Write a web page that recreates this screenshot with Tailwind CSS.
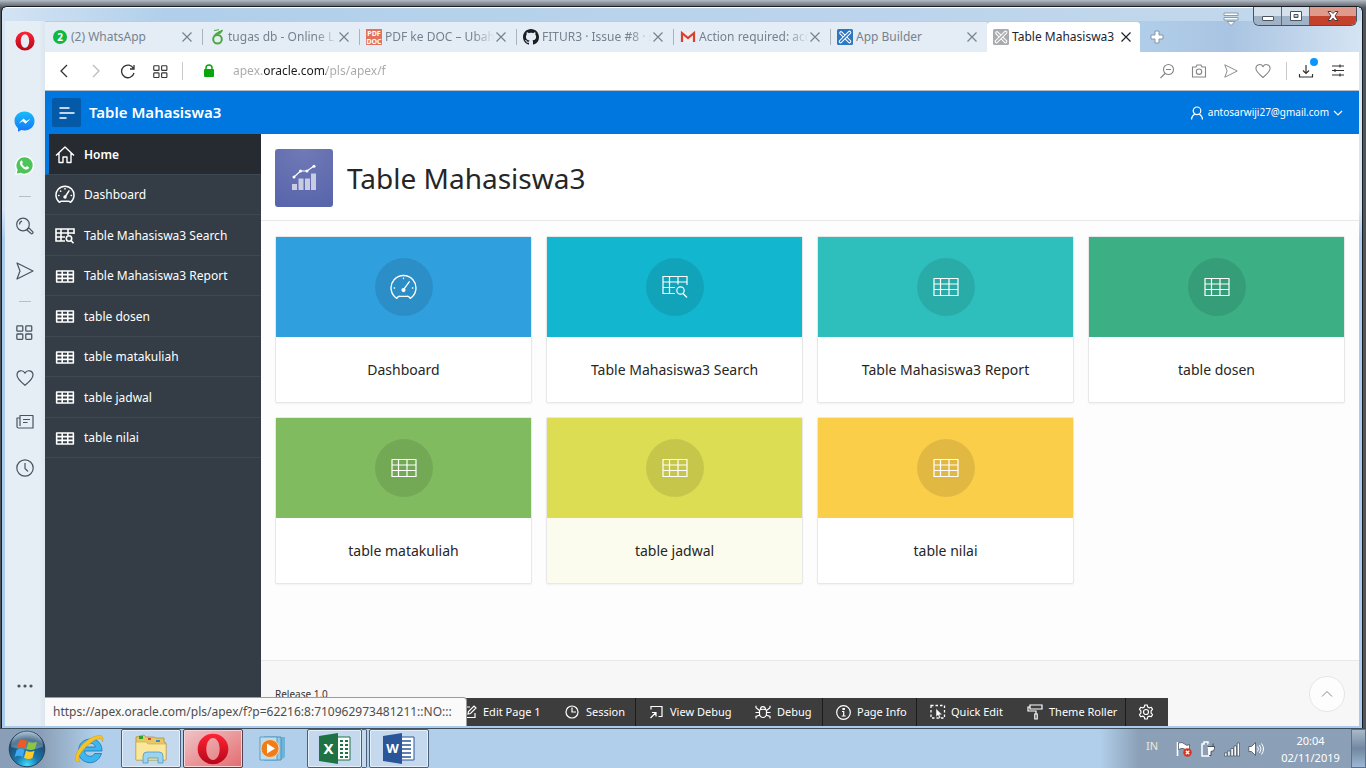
<!DOCTYPE html>
<html lang="en">
<head>
<meta charset="utf-8">
<title>Table Mahasiswa3</title>
<script src="https://cdn.jsdelivr.net/npm/@tailwindcss/browser@4"></script>
</head>
<body class="h-screen overflow-hidden bg-[#7d858e] font-['Noto_Sans','Open_Sans',sans-serif]">

<svg class="absolute size-0" aria-hidden="true">
  <defs><linearGradient id="og" x1="0" y1="0" x2="0" y2="1"><stop offset="0" stop-color="#ff2436"/><stop offset="1" stop-color="#b50719"/></linearGradient></defs>
  <symbol id="x" viewBox="0 0 12 12"><path d="M1.500 1.500l9 9M10.500 1.500l-9 9" fill="none" stroke="currentColor" stroke-width="1.200"/></symbol>
  <symbol id="grid4" viewBox="0 0 16 16"><g fill="none" stroke="currentColor" stroke-width="1.200"><rect x=".8" y="1.800" width="5.600" height="5" rx=".8"/><rect x="9.200" y="1.800" width="5.600" height="5" rx=".8"/><rect x=".8" y="9.400" width="5.600" height="5" rx=".8"/><rect x="9.200" y="9.400" width="5.600" height="5" rx=".8"/></g></symbol>
  <symbol id="heart" viewBox="0 0 18 18"><path d="M9 16.300C5 13 1 9.800 1 6a4.200 4.200 0 0 1 8-1.800A4.200 4.200 0 0 1 17 6c0 3.800-4 7-8 10.300z" fill="none" stroke="currentColor" stroke-width="1.200" stroke-linejoin="round"/></symbol>
  <symbol id="plane" viewBox="0 0 18 18"><path d="M1 1l16 8L1 17l3-8z" fill="none" stroke="currentColor" stroke-width="1.200" stroke-linejoin="round"/></symbol>
  <symbol id="table" viewBox="0 0 20 14"><path d="M1 1h18v12H1zM1 5h18M1 9h18M7 1v12M13 1v12" fill="none" stroke="currentColor" stroke-width="1.700" stroke-linejoin="round"/></symbol>
  <symbol id="tablethin" viewBox="0 0 26 20"><path d="M1 1.500h24v17H1zM1 7h24M1 12.500h24M7.500 1.500v17M16 1.500v17" fill="none" stroke="currentColor" stroke-width="1.200" stroke-linejoin="round"/></symbol>
  <symbol id="tsearch" viewBox="0 0 20 16"><g fill="none" stroke="currentColor" stroke-width="1.600"><path d="M19 6V1H1v12h9M1 5h18M1 9h9M6 1v12M13 1v6"/><circle cx="14" cy="10.500" r="2.700"/><path d="M16 12.500l2.500 2.700"/></g></symbol>
  <symbol id="tsearchthin" viewBox="0 0 26 24"><g fill="none" stroke="currentColor" stroke-width="1.200"><path d="M25 10V1.500H1v17h12M1 7h24M1 12.500h12M7.500 1.500v17M16 1.500v8"/><circle cx="18.500" cy="15.500" r="3.700"/><path d="M21 18.500l4 4"/></g></symbol>
  <symbol id="gauge" viewBox="0 0 20 20"><g fill="none" stroke="currentColor" stroke-width="1.500" stroke-linecap="round" stroke-linejoin="round"><path d="M4.500 17.300A9 9 0 1 1 15.500 17.300L13.800 16.200H6.200z"/><path d="M10 12l4-6.200M10 3.500v.4M3.600 10.500h.4M16.200 10.500h.3M5.500 6l.2.2"/></g><circle cx="10" cy="12" r="1.700" fill="currentColor"/></symbol>
  <symbol id="gaugethin" viewBox="0 1 26 26"><g fill="none" stroke="currentColor" stroke-width="1.300" stroke-linecap="round" stroke-linejoin="round"><path d="M6.500 24.500A12 12 0 1 1 19.500 24.500Q18.500 22 16 22.500H10Q7.500 22 6.500 24.500z"/><path d="M13 16l5.500-7.500M13 5v.3M4 14.500h.4M21.600 14.500h.4"/></g><circle cx="13" cy="16.500" r="2" fill="currentColor"/></symbol>
  <symbol id="apexlogo" viewBox="0 0 16 16"><rect width="16" height="16" rx="1.500" fill="currentColor"/><g fill="none" stroke-linecap="round"><path d="M4 4l8.500 8.500" stroke="#fff" stroke-width="3.600"/><path d="M4 4l8.500 8.500" stroke="currentColor" stroke-width="1.600"/><path d="M12.500 3.500l-9 9" stroke="#fff" stroke-width="3.600"/><path d="M12.500 3.500l-9 9" stroke="currentColor" stroke-width="1.600"/></g></symbol>
  <symbol id="opera" viewBox="0 0 24 24"><path fill-rule="evenodd" fill="url(#og)" d="M12 .5a11.500 11.500 0 1 1 0 23a11.500 11.500 0 0 1 0-23zM12 3.800c-3 0-5 3.700-5 8.200s2 8.200 5 8.200s5-3.700 5-8.200s-2-8.200-5-8.200z"/></symbol>
</svg>

<div class="flex h-full flex-col">
  <!-- Browser window -->
  <div class="relative min-h-0 flex-1 bg-linear-to-b from-[#b4bcc6] to-[#50555b] to-[8px] pt-[6px] pr-[3px] pl-px">
    <div class="flex h-full flex-col rounded-t-md border border-b-0 border-[#191d22] bg-linear-to-b from-[#d8e6f4] from-[28%] to-[#abcbed] to-[32%] px-[3px] pb-[2px] shadow-[inset_0_1px_0_#ffffff]">
      <div class="-mx-[2px] mt-px h-[13px] shrink-0 bg-linear-to-r from-[#d3e3f3] via-[#b1cfea] via-[12%] to-[#c3d8ec]"></div>
      <div class="flex min-h-0 flex-1">
        <!-- Opera sidebar -->
        <aside class="relative z-10 flex w-10 shrink-0 flex-col items-center bg-linear-to-r from-[#e5edf5] from-[85%] to-[#dce6ef] pt-[10px] pr-px text-[#49545f]">
          <button aria-label="Opera menu" class="mb-[60px]"><svg class="size-5"><use href="#opera"/></svg></button>
          <button aria-label="Messenger" class="mb-[24px]"><svg class="size-[21px]" viewBox="0 0 21 21"><defs><linearGradient id="mg" x1="0" y1="0" x2="0" y2="1"><stop offset="0" stop-color="#16bdfb"/><stop offset="1" stop-color="#1475f8"/></linearGradient></defs><path fill="url(#mg)" d="M10.500.5c6 0 10 4.300 10 9.500s-4 9.500-10 9.500c-1.200 0-2.300-.2-3.200-.5L4 20.800v-3.500C2 15.500.5 13 .5 10c0-5.200 4-9.500 10-9.500z"/><path d="M4.500 12.500l5-5 2.800 2.500 4.200-2.300-5 5-2.800-2.500z" fill="#fff"/></svg></button>
          <button aria-label="WhatsApp" class="mb-[21px]"><svg class="size-[19px]" viewBox="0 0 19 19"><path fill="#fff" d="M9.500 0a9.500 9.500 0 1 1-4 18L0 19l1.200-5A9.500 9.500 0 0 1 9.500 0z"/><path fill="#4cc45a" d="M9.500 1.200a8.200 8.200 0 1 1-3.800 15.500L1.700 17.500l1-3.800A8.200 8.200 0 0 1 9.500 1.200z"/><path fill="#fff" d="M5.500 5.300c1-1.200 1.600-.9 2 .2.500 1.200.4 1.300-.4 2.200.8 1.800 2 2.900 3.600 3.500.9-1.200 1.100-1.200 2.100-.7 1.300.6 1.500.8.900 2-1.300 1.900-4 1-5.900-.6C5.500 10 4 7.200 5.500 5.300z"/></svg></button>
          <span class="mb-5 h-px w-3 bg-[#b4bfca]"></span>
          <button aria-label="Search" class="mb-[26px]"><svg class="size-[19px]" viewBox="0 0 19 19" fill="none" stroke="currentColor" stroke-width="1.200"><circle cx="8" cy="7.500" r="6.300"/><path d="M4.500 7.500A3.500 3.500 0 0 1 7 4.200M12.500 12l1.500-1 3.800 3.800c.8 1-.8 2.500-1.800 1.700L12 13z"/></svg></button>
          <button aria-label="My Flow" class="mb-[21px]"><svg class="size-[18px]"><use href="#plane"/></svg></button>
          <span class="mb-[22px] h-px w-3 bg-[#b4bfca]"></span>
          <button aria-label="Speed Dial" class="mb-7"><svg class="size-[17px]"><use href="#grid4"/></svg></button>
          <button aria-label="Bookmarks" class="mb-[26px]"><svg class="size-[18px]"><use href="#heart"/></svg></button>
          <button aria-label="News" class="mb-7"><svg class="size-[18px]" viewBox="0 0 18 18" fill="none" stroke="currentColor" stroke-width="1.200" stroke-linejoin="round"><path d="M4 2.500h13v12.500H2.500c-1 0-1.500-.7-1.500-1.500V5h3zM4 2.500v10.500M7 6.500h7M7 9.500h4.500"/></svg></button>
          <button aria-label="History"><svg class="size-[18px]" viewBox="0 0 18 18" fill="none" stroke="currentColor" stroke-width="1.200"><circle cx="9" cy="9" r="8.200"/><path d="M9 4v5.500l3 3"/></svg></button>
          <button aria-label="Sidebar setup" class="mt-auto mb-[38px]"><svg class="h-1 w-4" viewBox="0 0 16 4" fill="currentColor"><circle cx="2" cy="2" r="1.600"/><circle cx="8" cy="2" r="1.600"/><circle cx="14" cy="2" r="1.600"/></svg></button>
        </aside>

        <div class="flex min-w-0 flex-1 flex-col">
          <!-- Tabs -->
          <div class="-mr-[3px] flex h-[31px] shrink-0 items-stretch bg-linear-to-r from-[#b1cfea] from-[82%] via-[#a9c4e2] via-[90%] to-[#d5e4f3] text-[12px] text-[#75828f]">
            <div class="flex w-[157px] items-center border-t border-[#c5cbd1] bg-[#e4edf5] pr-[9px] pl-2">
              <svg class="mr-1 size-[14px] shrink-0" viewBox="0 0 14 14"><circle cx="7" cy="7" r="7" fill="#0fb843"/><text x="7" y="10.500" text-anchor="middle" font-size="10" font-weight="bold" fill="#fff">2</text></svg>
              <a href="#" class="min-w-0 flex-1 truncate">(2) WhatsApp</a>
              <button aria-label="Close WhatsApp"><svg class="size-3"><use href="#x"/></svg></button>
            </div>
            <div class="flex w-[157px] items-center border-t border-[#c5cbd1] bg-[#e4edf5] pr-[9px]">
              <span class="mr-2 h-4 w-px bg-[#a9b3bd]"></span>
              <svg class="mr-1 h-4 w-[13px] shrink-0" viewBox="0 0 13 16" fill="none"><circle cx="6.500" cy="10.200" r="4.300" stroke="#4ca83e" stroke-width="2"/><path d="M2.500 8.500C3 5 6 3.500 11.500 1.200 10.500 4.500 8 5 5 6" fill="#4ca83e" stroke="#4ca83e"/><path d="M3 1.500l5-.8" stroke="#4ca83e"/></svg>
              <a href="#" class="min-w-0 flex-1 whitespace-nowrap mask-r-from-80%">tugas db - Online L</a>
              <button aria-label="Close tugas db"><svg class="size-3"><use href="#x"/></svg></button>
            </div>
            <div class="flex w-[157px] items-center border-t border-[#c5cbd1] bg-[#e4edf5] pr-[9px]">
              <span class="mr-[6px] h-4 w-px bg-[#a9b3bd]"></span>
              <svg class="mr-[3px] size-4 shrink-0" viewBox="0 0 16 16"><rect width="16" height="16" fill="#e2725b"/><g font-size="7" font-weight="bold" fill="#fff" text-anchor="middle"><text x="8" y="7">PDF</text><text x="8" y="14.500">DOC</text></g></svg>
              <a href="#" class="min-w-0 flex-1 whitespace-nowrap mask-r-from-80%">PDF ke DOC – Ubah</a>
              <button aria-label="Close PDF ke DOC"><svg class="size-3"><use href="#x"/></svg></button>
            </div>
            <div class="flex w-[157px] items-center border-t border-[#c5cbd1] bg-[#e4edf5] pr-[9px]">
              <span class="mr-[6px] h-4 w-px bg-[#a9b3bd]"></span>
              <svg class="mr-[3px] size-4 shrink-0" viewBox="0 0 16 16" fill="#1b1f23"><path d="M8 0C3.580 0 0 3.580 0 8c0 3.540 2.290 6.530 5.470 7.590.4.070.55-.17.55-.38 0-.19-.01-.82-.01-1.490-2.010.37-2.530-.49-2.690-.94-.09-.23-.48-.94-.82-1.130-.28-.15-.68-.52-.01-.53.63-.01 1.080.58 1.230.82.72 1.210 1.870.87 2.330.66.07-.52.28-.87.51-1.070-1.780-.2-3.640-.89-3.640-3.950 0-.87.31-1.590.82-2.150-.08-.2-.36-1.020.08-2.120 0 0 .67-.21 2.200.82.64-.18 1.320-.27 2-.27s1.360.09 2 .27c1.530-1.040 2.200-.82 2.200-.82.44 1.100.16 1.920.08 2.120.51.56.82 1.270.82 2.150 0 3.070-1.870 3.750-3.650 3.950.29.25.54.73.54 1.480 0 1.070-.01 1.930-.01 2.200 0 .21.15.46.55.38A8.010 8.010 0 0 0 16 8c0-4.420-3.580-8-8-8z"/></svg>
              <a href="#" class="min-w-0 flex-1 whitespace-nowrap mask-r-from-80%">FITUR3 · Issue #8 · s</a>
              <button aria-label="Close FITUR3"><svg class="size-3"><use href="#x"/></svg></button>
            </div>
            <div class="flex w-[157px] items-center border-t border-[#c5cbd1] bg-[#e4edf5] pr-[9px]">
              <span class="mr-[6px] h-4 w-px bg-[#a9b3bd]"></span>
              <svg class="mr-[3px] size-4 shrink-0" viewBox="0 0 16 16"><path d="M2 3h12v10H2z" fill="#eee"/><path d="M2 13V4l6 5 6-5v9" fill="none" stroke="#d93f30" stroke-width="2.200"/></svg>
              <a href="#" class="min-w-0 flex-1 whitespace-nowrap mask-r-from-80%">Action required: acc</a>
              <button aria-label="Close Action required"><svg class="size-3"><use href="#x"/></svg></button>
            </div>
            <div class="flex w-[157px] items-center border-t border-[#c5cbd1] bg-[#e4edf5] pr-[9px]">
              <span class="mr-[6px] h-4 w-px bg-[#a9b3bd]"></span>
              <svg class="mr-[3px] size-4 shrink-0 text-[#2d76c0]"><use href="#apexlogo"/></svg>
              <a href="#" class="min-w-0 flex-1 truncate">App Builder</a>
              <button aria-label="Close App Builder"><svg class="size-3"><use href="#x"/></svg></button>
            </div>
            <div class="flex w-[153px] items-center rounded-t-sm border-t border-[#c5cbd1] bg-white pr-2 pl-[6px] text-[#1c2430]">
              <svg class="mr-[3px] size-4 shrink-0 text-[#a8acb0]"><use href="#apexlogo"/></svg>
              <a href="#" class="min-w-0 flex-1 whitespace-nowrap">Table Mahasiswa3</a>
              <button aria-label="Close Table Mahasiswa3"><svg class="size-3"><use href="#x"/></svg></button>
            </div>
            <button aria-label="New tab" class="ml-[10px]"><svg class="size-[14px]" viewBox="0 0 14 14"><path d="M5 1h4v4h4v4H9v4H5V9H1V5h4z" fill="#fff" stroke="#8496aa"/></svg></button>
          </div>

          <!-- Address bar -->
          <div class="flex h-[39px] shrink-0 items-center border-b border-[#b5bcc4] bg-white text-[#333]">
            <button aria-label="Back" class="ml-[11px]"><svg class="size-4" viewBox="0 0 16 16" fill="none" stroke="currentColor" stroke-width="1.300"><path d="M11 2L5 8l6 6"/></svg></button>
            <button aria-label="Forward" class="ml-4 text-[#bbb]"><svg class="size-4" viewBox="0 0 16 16" fill="none" stroke="currentColor" stroke-width="1.300"><path d="M5 2l6 6-6 6"/></svg></button>
            <button aria-label="Reload" class="ml-4"><svg class="size-4" viewBox="0 0 16 16" fill="none" stroke="currentColor" stroke-width="1.300"><path d="M13.500 5.500A6.300 6.300 0 1 0 14 10M14 2v4h-4"/></svg></button>
            <button aria-label="Speed Dial" class="ml-[17px]"><svg class="size-[15px]"><use href="#grid4"/></svg></button>
            <span class="ml-[14px] h-[18px] w-px bg-[#c9c9c9]"></span>
            <svg class="ml-5 h-[14px] w-3" viewBox="0 0 12 14"><rect x="1" y="5" width="10" height="8" rx="1" fill="#0aa50a"/><path d="M3 6V4a3 3 0 0 1 6 0v2" fill="none" stroke="#0aa50a" stroke-width="1.500"/></svg>
            <input aria-label="Address" value="apex.oracle.com/pls/apex/f" class="ml-[18px] min-w-0 flex-1 bg-[linear-gradient(90deg,#a8a8a8_0_30px,#1a1a1a_30px_93px,#a8a8a8_93px)] bg-clip-text text-[12px] text-transparent outline-none">
            <div class="flex items-center gap-4 pr-[13px] text-[#858585]">
              <button aria-label="Zoom out"><svg class="size-4" viewBox="0 0 16 16" fill="none" stroke="currentColor" stroke-width="1.100"><circle cx="9.500" cy="6.500" r="5"/><path d="M7 6.500h5M6 10.500L1.500 15"/></svg></button>
              <button aria-label="Snapshot"><svg class="size-4" viewBox="0 0 16 16" fill="none" stroke="currentColor" stroke-width="1.100"><path d="M1.500 4H5l1-2h4l1 2h3.500v10h-13z"/><circle cx="8" cy="8.700" r="2.700"/></svg></button>
              <button aria-label="Send"><svg class="h-[14px] w-4"><use href="#plane"/></svg></button>
              <button aria-label="Bookmark"><svg class="size-4"><use href="#heart"/></svg></button>
              <span class="-mx-px h-[18px] w-px bg-[#c9c9c9]"></span>
              <button aria-label="Downloads" class="relative -ml-1 text-[#333]"><svg class="size-4" viewBox="0 0 16 16" fill="none" stroke="currentColor" stroke-width="1.200"><path d="M8 2v8.500M5 7.500l3 3 3-3M1.500 11v3h13v-3"/></svg><span class="absolute -top-[5px] left-[12px] size-2 rounded-full bg-[#0b96ff]"></span></button>
              <button aria-label="Easy setup" class="text-[#333]"><svg class="size-4" viewBox="0 0 16 16" fill="none" stroke="currentColor" stroke-width="1.200"><path d="M2 3h12M2 7.500h12M2 12h12M10 1.500v3M5 6v3M10 10.500v3"/></svg></button>
            </div>
          </div>

          <!-- Page -->
          <div class="relative flex min-h-0 flex-1 flex-col bg-[#fdfdfd]">
            <header class="flex h-[43px] shrink-0 items-center bg-[#0076df] pr-4 pl-[7px] text-white">
              <button aria-label="Toggle navigation" class="flex size-[29px] items-center justify-center rounded-xs bg-[#055aa8]"><svg class="size-4" viewBox="0 0 16 16" stroke="#fff" stroke-width="1.600"><path d="M.5 3h10M.5 8h15M.5 13h7"/></svg></button>
              <a href="#" class="ml-2 text-[15px] font-semibold">Table Mahasiswa3</a>
              <button class="ml-auto flex items-center text-[10px]"><svg class="mr-1 size-[14px]" viewBox="0 0 14 14" fill="none" stroke="#fff" stroke-width="1.200"><circle cx="7" cy="4.800" r="3.800"/><path d="M1.500 13.500c0-2.500 1-4 3.200-5.200M12.500 13.500c0-2.500-1-4-3.200-5.200"/></svg>antosarwiji27@gmail.com<svg class="ml-1 size-[10px]" viewBox="0 0 10 10" fill="none" stroke="#fff" stroke-width="1.200"><path d="M1 3l4 4 4-4"/></svg></button>
            </header>
            <div class="flex min-h-0 flex-1">
              <nav class="w-[216px] shrink-0 bg-[#343d46] text-[12px] text-white">
                <div class="grid h-[324px] grid-rows-8">
                  <a href="#" class="flex items-center gap-[9px] border-b border-l-4 border-b-[#3e4852] border-l-[#0076df] bg-[#252b31] pt-[2px] pl-[6px] font-semibold"><svg class="size-5" viewBox="0 0 20 20" fill="none" stroke="currentColor" stroke-width="1.400" stroke-linejoin="round"><path d="M1 10.500L10 2l9 8.500M4 8v9.500h4V12h4v5.500h4V8"/></svg>Home</a>
                  <a href="#" class="flex items-center gap-[9px] border-b border-[#3e4852] pt-[2px] pl-[10px]"><svg class="size-5"><use href="#gauge"/></svg>Dashboard</a>
                  <a href="#" class="flex items-center gap-[9px] border-b border-[#3e4852] pt-[2px] pl-[10px]"><svg class="h-4 w-5"><use href="#tsearch"/></svg>Table Mahasiswa3 Search</a>
                  <a href="#" class="flex items-center gap-[9px] border-b border-[#3e4852] pt-[2px] pl-[10px]"><svg class="h-[13px] w-5"><use href="#table"/></svg>Table Mahasiswa3 Report</a>
                  <a href="#" class="flex items-center gap-[9px] border-b border-[#3e4852] pt-[2px] pl-[10px]"><svg class="h-[13px] w-5"><use href="#table"/></svg>table dosen</a>
                  <a href="#" class="flex items-center gap-[9px] border-b border-[#3e4852] pt-[2px] pl-[10px]"><svg class="h-[13px] w-5"><use href="#table"/></svg>table matakuliah</a>
                  <a href="#" class="flex items-center gap-[9px] border-b border-[#3e4852] pt-[2px] pl-[10px]"><svg class="h-[13px] w-5"><use href="#table"/></svg>table jadwal</a>
                  <a href="#" class="flex items-center gap-[9px] border-b border-[#3e4852] pt-[2px] pl-[10px]"><svg class="h-[13px] w-5"><use href="#table"/></svg>table nilai</a>
                </div>
              </nav>
              <main class="flex min-w-0 flex-1 flex-col">
                <div class="flex h-[87px] shrink-0 items-center gap-[14px] border-b border-[#e8e8e8] bg-white px-[14px] pt-px">
                  <svg class="h-[58px] w-[58px]" viewBox="0 0 58 58"><defs><radialGradient id="hg" cx=".5" cy="0" r="1"><stop offset="0" stop-color="#717ab7"/><stop offset="1" stop-color="#5966ab"/></radialGradient></defs><rect width="58" height="58" rx="3" fill="url(#hg)"/><path d="M17 35h5v6h-5zM23.500 29.500h5V41h-5zM30 29.500h5V41h-5zM36 24.500h5V41h-5z" fill="#fff" opacity=".65"/><path d="M19 28l6.500-6 6.500 0 7-5" fill="none" stroke="#fff" stroke-width="1.200"/><g fill="#fff"><circle cx="19" cy="28" r="1.500"/><circle cx="25.500" cy="22" r="1.500"/><circle cx="32" cy="22" r="1.500"/><circle cx="39" cy="17.300" r="1.500"/></g></svg>
                  <h1 class="text-[28px] text-[#262626]">Table Mahasiswa3</h1>
                </div>
                <div class="grid flex-1 grid-cols-4 content-start gap-[14px] px-[14px] pt-[15px] text-[14px] text-[#262626]">
                  <a href="#" class="rounded-xs border border-[#e8e8e8] bg-white shadow-xs"><span class="flex h-[100px] items-center justify-center bg-[#309fdd]"><span class="flex size-[58px] items-center justify-center rounded-full bg-black/10 text-white"><svg class="size-[27px]"><use href="#gaugethin"/></svg></span></span><span class="flex h-[65px] items-center justify-center">Dashboard</span></a>
                  <a href="#" class="rounded-xs border border-[#e8e8e8] bg-white shadow-xs"><span class="flex h-[100px] items-center justify-center bg-[#13b6cf]"><span class="flex size-[58px] items-center justify-center rounded-full bg-black/10 text-white"><svg class="h-6 w-[26px]"><use href="#tsearchthin"/></svg></span></span><span class="flex h-[65px] items-center justify-center">Table Mahasiswa3 Search</span></a>
                  <a href="#" class="rounded-xs border border-[#e8e8e8] bg-white shadow-xs"><span class="flex h-[100px] items-center justify-center bg-[#2ebfbc]"><span class="flex size-[58px] items-center justify-center rounded-full bg-black/10 text-white"><svg class="h-5 w-[26px]"><use href="#tablethin"/></svg></span></span><span class="flex h-[65px] items-center justify-center">Table Mahasiswa3 Report</span></a>
                  <a href="#" class="rounded-xs border border-[#e8e8e8] bg-white shadow-xs"><span class="flex h-[100px] items-center justify-center bg-[#3caf85]"><span class="flex size-[58px] items-center justify-center rounded-full bg-black/10 text-white"><svg class="h-5 w-[26px]"><use href="#tablethin"/></svg></span></span><span class="flex h-[65px] items-center justify-center">table dosen</span></a>
                  <a href="#" class="rounded-xs border border-[#e8e8e8] bg-white shadow-xs"><span class="flex h-[100px] items-center justify-center bg-[#81bb5f]"><span class="flex size-[58px] items-center justify-center rounded-full bg-black/10 text-white"><svg class="h-5 w-[26px]"><use href="#tablethin"/></svg></span></span><span class="flex h-[65px] items-center justify-center">table matakuliah</span></a>
                  <a href="#" class="rounded-xs border border-[#e8e8e8] bg-[#fbfced] shadow-xs"><span class="flex h-[100px] items-center justify-center bg-[#dddd53]"><span class="flex size-[58px] items-center justify-center rounded-full bg-black/10 text-white"><svg class="h-5 w-[26px]"><use href="#tablethin"/></svg></span></span><span class="flex h-[65px] items-center justify-center">table jadwal</span></a>
                  <a href="#" class="rounded-xs border border-[#e8e8e8] bg-white shadow-xs"><span class="flex h-[100px] items-center justify-center bg-[#fbce4a]"><span class="flex size-[58px] items-center justify-center rounded-full bg-black/10 text-white"><svg class="h-5 w-[26px]"><use href="#tablethin"/></svg></span></span><span class="flex h-[65px] items-center justify-center">table nilai</span></a>
                </div>
                <footer class="flex h-[66px] shrink-0 items-start justify-between border-t border-[#e8e8e8] bg-[#f7f7f7] px-[14px] pt-[15px]">
                  <span class="pt-[11px] text-[10px] text-[#333]">Release 1.0</span>
                  <button aria-label="Back to top" class="flex size-9 items-center justify-center rounded-full border border-[#e6e6e6] bg-[#fdfdfd] text-[#888]"><svg class="size-3" viewBox="0 0 12 12" fill="none" stroke="currentColor"><path d="M1 8.500l5-5 5 5"/></svg></button>
                </footer>
              </main>
            </div>

            <!-- Developer toolbar -->
            <div class="absolute right-[191px] bottom-0 flex h-7 bg-[#3d3d3d] text-[11px] text-white">
              <button class="flex w-[95px] items-center gap-[6px] pl-[7px]"><svg class="size-[14px]" viewBox="0 0 14 14" fill="none" stroke="currentColor" stroke-width="1.200"><path d="M7 2H1.500v10.500H12V8M5 9l.5-2.500L11 1l2 2-5.500 5.500z"/></svg>Edit Page 1</button>
              <button class="flex w-[85px] items-center gap-[7px] border-r border-[#1c1c1c] pl-[14px]"><svg class="size-[14px]" viewBox="0 0 14 14" fill="none" stroke="currentColor" stroke-width="1.200"><circle cx="7" cy="7" r="6"/><path d="M7 2.500V7h4"/></svg>Session</button>
              <button class="flex w-[106px] items-center gap-[7px] pl-[13px]"><svg class="size-[14px]" viewBox="0 0 14 14" fill="none" stroke="currentColor" stroke-width="1.200"><path d="M2 4.500V1.500h11v10H9.500M1.500 13l5.500-5.500M3 7.500h4v4"/></svg>View Debug</button>
              <button class="flex w-[81px] items-center gap-[6px] border-r border-[#1c1c1c] pl-[13px]"><svg class="h-[14px] w-4" viewBox="0 0 16 14" fill="none" stroke="currentColor" stroke-width="1.200"><path d="M4.500 5q3.500-1.500 7 0v3.500a3.500 4 0 0 1-7 0zM5.500 4.500a2.500 2.800 0 0 1 5 0M1 .8v2l3.500 2.700M15 .8v2l-3.500 2.700M.5 7.500h4M11.500 7.500h4M1 13.500v-2l4-1.500M15 13.500v-2l-4-1.500"/></svg>Debug</button>
              <button class="flex w-[94px] items-center gap-[6px] border-r border-[#1c1c1c] pl-[13px]"><svg class="size-[15px]" viewBox="0 0 15 15" fill="none" stroke="currentColor" stroke-width="1.200"><circle cx="7.500" cy="7.500" r="6.800"/><path d="M6 6.500h1.700V11M5.700 11h4M7 3.500h1.300v1H7z"/></svg>Page Info</button>
              <button class="flex w-[97px] items-center gap-[5px] pl-[13px]"><svg class="size-4" viewBox="0 0 16 16"><rect x="1" y="1.500" width="13.500" height="12.500" fill="none" stroke="#fff" stroke-width="1.300" stroke-dasharray="2.500 2"/><path d="M6 4.500v8.500l2-1.800 1.200 3.300 1.600-.7-1.300-3h2.800z" fill="#fff" stroke="#3d3d3d" stroke-width=".5"/></svg>Quick Edit</button>
              <button class="flex w-[112px] items-center gap-[6px] border-r border-[#1c1c1c] pl-[13px]"><svg class="size-4" viewBox="0 0 16 16" fill="none" stroke="currentColor" stroke-width="1.200"><path d="M3 1h12v4H3zM3 3H1v4h8v3M7.800 10h2.400v5H7.800z"/></svg>Theme Roller</button>
              <button aria-label="Options" class="flex w-[42px] items-center justify-center pr-[2px]"><svg class="size-4" viewBox="0 0 16 16" fill="none" stroke="currentColor" stroke-width="1.200" stroke-linejoin="round"><path d="M6.800 1h2.400l.5 2 1.600.9 2-.6 1.200 2.100-1.400 1.500v2.200l1.400 1.500-1.200 2.100-2-.6-1.600.9-.5 2H6.800l-.5-2-1.600-.9-2 .6-1.200-2.100 1.400-1.500V6.900L1.500 5.400l1.200-2.100 2 .6L6.300 3z"/><circle cx="8" cy="8" r="2.500"/></svg></button>
            </div>
            <!-- Link status -->
            <div class="absolute bottom-0 left-0 flex h-[29px] w-[422px] items-center rounded-tr-sm border-t border-r border-[#9b9b9b] bg-[#fafafa] pl-2 text-[12px] whitespace-nowrap text-[#4d4d4d]">https://apex.oracle.com/pls/apex/f?p=62216:8:710962973481211::NO:::</div>
          </div>
        </div>
      </div>
    </div>

    <!-- Window controls -->
    <div class="absolute top-[7px] right-[9px] flex items-start">
      <button aria-label="Tab menu" class="mt-[5px] mr-[14px]"><svg class="h-[14px] w-4" viewBox="0 0 16 14" fill="#fff" stroke="#8292a5" stroke-width=".9"><path d="M1 1h14v2.500H1zM1 5.500h14V8H1zM4 9.500h8L8 13.500z"/></svg></button>
      <div class="flex h-[19px] overflow-hidden rounded-b-md border border-t-0 border-[#46525f] text-white">
        <button aria-label="Minimize" class="flex w-7 items-center justify-center border-r border-[#5b6876] bg-linear-to-b from-[#d4e0ec] from-50% to-[#9fb2c6] to-50%"><svg class="h-3 w-[14px]" viewBox="0 0 14 12"><rect x="1.500" y="6.500" width="11" height="4" rx=".5" fill="#fff" stroke="#4a535f"/></svg></button>
        <button aria-label="Maximize" class="flex w-7 items-center justify-center border-r border-[#5b6876] bg-linear-to-b from-[#d4e0ec] from-50% to-[#9fb2c6] to-50%"><svg class="h-3 w-[14px]" viewBox="0 0 14 12"><path fill-rule="evenodd" d="M1.500 1.500h11v9h-11zM5 4.500v3h4v-3z" fill="#fff" stroke="#4a535f"/></svg></button>
        <button aria-label="Close window" class="flex w-[46px] items-center justify-center bg-linear-to-b from-[#df9a8b] from-50% to-[#c4412c] to-50%"><svg class="h-3 w-[14px]" viewBox="0 0 14 12"><path d="M2 1.500h3l2 2 2-2h3L9 6l3 4.500H9l-2-2.300-2 2.300H2L5 6z" fill="#fff" stroke="#4a3a44"/></svg></button>
      </div>
    </div>
  </div>

  <!-- Taskbar -->
  <div class="relative flex h-10 shrink-0 items-stretch border-t border-[#3e4f60] bg-linear-to-r from-[#8a9fb7] from-[3%] via-[#b1cfeb] via-[7%] to-[#b1cfeb] text-[11px] text-white">
    <button aria-label="Start" class="flex w-[54px] items-center justify-center"><svg class="size-[38px]" viewBox="0 0 38 38"><defs><radialGradient id="sg" cx=".5" cy=".95" r=".9"><stop offset="0" stop-color="#3fe0ff"/><stop offset=".35" stop-color="#1a78ad"/><stop offset=".8" stop-color="#1c4a70"/><stop offset="1" stop-color="#7fa0ba"/></radialGradient></defs><circle cx="19" cy="19" r="17.800" fill="url(#sg)" stroke="#27435c"/><path d="M3 17a16 16 0 0 1 32 0q-16 5-32 0z" fill="#fff" opacity=".25"/><path d="M11 11q4-2.500 8 0l-2 7.500q-4-2.500-8 0z" fill="#ee5a24"/><path d="M20.500 11.700q4 2 8.500 0l-2 7.300q-4 2-8.500 0z" fill="#8cc63f"/><path d="M8.600 20q4-2.500 8 0l-2 7q-4-2.500-8 0z" fill="#3fa9f5"/><path d="M18 20.500q4 2.300 8.500.3l-2 7.200q-4 2-8.500-.3z" fill="#ffc928"/></svg></button>
    <button aria-label="Internet Explorer" class="mr-[2px] ml-1 flex w-[61px] items-center justify-center"><svg class="h-8 w-[34px]" viewBox="0 0 34 32"><path d="M30 18H12.500c.5 6 8.500 7 10 2.500h7C27 28 21 30.500 16 29.500 9 28 6 23 6.500 17 7 10 12 6 19 6c7 0 11 5 11 12zM12.800 14h10.500c-.5-5-9.500-5.500-10.500 0z" fill="#3fb5ee" stroke="#1577bb" stroke-width=".8"/><path d="M5 29C-1 23 12 6 24 3c6-2 8 1 6.500 6C31 5 27 4 20 9 10 16 4 25 8 28.500z" fill="#f7c325" stroke="#c9920f" stroke-width=".4"/></svg></button>
    <button aria-label="Windows Explorer" class="mr-[2px] flex w-[60px] items-center justify-center rounded-xs border border-[#4b6078] bg-[#c4d9ee] shadow-[inset_0_0_0_1px_#e4eff9]"><svg class="h-8 w-8" viewBox="0 0 32 32"><path d="M1 4l8-2 2 2 8 0 2 1h8v4l2 1v17H1z" fill="#e9c864" stroke="#a88a35" stroke-width=".7"/><path d="M4 3h4v3H4z" fill="#29a329"/><path d="M13 5h3v2h-3z" fill="#d8432f"/><path d="M21 7h4v2h-4z" fill="#2e8fd8"/><path d="M1 9h10l2 2h18v16H1z" fill="#fae79b" stroke="#c8a646" stroke-width=".6"/><path d="M8 30V23q0-4 4-4h12q4 0 4 4v7h-5v-5H13v5z" fill="#9cd3ee" stroke="#4b9cc6" stroke-width=".8"/></svg></button>
    <button aria-label="Opera" class="mr-[2px] flex w-[60px] items-center justify-center rounded-xs border border-[#54424f] bg-linear-to-br from-[#eec4c8] to-[#e16b70] shadow-[inset_0_0_0_1px_#f5d5d7]"><svg class="size-8"><use href="#opera"/></svg></button>
    <button aria-label="Media Player" class="mr-[2px] flex w-[60px] items-center justify-center pr-1"><svg class="size-[28px]" viewBox="0 0 28 28"><path d="M9 2h17v20l-4 3H9z" fill="#6fb3da"/><path d="M5 2h17v23H5z" fill="#91c9e7" stroke="#4e91b9"/><path d="M1 2h17v23H1z" fill="#bbddf0" stroke="#5a9fc4"/><circle cx="11" cy="13.500" r="9" fill="#ef7d1a" stroke="#fbd2a6"/><path d="M8 8.500l8 5-8 5z" fill="#fff"/></svg></button>
    <button aria-label="Excel" class="flex w-[55px] items-center justify-center rounded-xs border border-[#4b6078] bg-[#c4d9ee] shadow-[inset_0_0_0_1px_#e4eff9]"><svg class="h-[31px] w-8" viewBox="0 0 32 31"><path d="M16 4h15v23H16z" fill="#fff" stroke="#1f7244"/><path d="M21 8h3M26 8h3M21 12h3M26 12h3M21 16h3M26 16h3M21 20h3M26 20h3M21 24h3M26 24h3" stroke="#1f7244" stroke-width="2"/><path d="M0 3l19-3v31L0 28z" fill="#1f7244"/><text x="9.500" y="21" text-anchor="middle" font-size="15" font-weight="bold" fill="#fff">X</text></svg></button>
    <span class="mr-[2px] w-[5px] rounded-r-xs border border-l-0 border-[#4b6078] bg-[#c4d9ee]"></span>
    <button aria-label="Word" class="flex w-[60px] items-center justify-center rounded-xs border border-[#4b6078] bg-[#c4d9ee] shadow-[inset_0_0_0_1px_#e4eff9]"><svg class="h-[31px] w-8" viewBox="0 0 32 31"><path d="M16 4h15v23H16z" fill="#fff" stroke="#2a5699"/><path d="M19 8h9M19 12h9M19 16h9M19 20h9M19 24h9" stroke="#2a5699" stroke-width="1.500"/><path d="M0 3l19-3v31L0 28z" fill="#2a5699"/><text x="9.500" y="20" text-anchor="middle" font-size="13" font-weight="bold" fill="#fff">W</text></svg></button>

    <div class="ml-auto flex items-center bg-linear-to-r from-[#b1cfeb] to-[#8b9fb6] to-[40px] pl-[46px]">
      <span class="mb-1 w-[30px] text-[#efe9d5]">IN</span>
      <svg class="mr-2 size-4" viewBox="0 0 16 16"><path d="M1.500 1v14" stroke="#fff" stroke-width="1.600"/><path d="M2.500 2q4-1.500 6 1t5 .5v5q-3 1-5-.5t-6 .5z" fill="#fff" stroke="#3f4c59" stroke-width=".7"/><circle cx="11.500" cy="11.500" r="4.200" fill="#d7301e"/><path d="M9.800 9.800l3.400 3.400M13.200 9.800l-3.400 3.400" stroke="#fff" stroke-width="1.300"/></svg>
      <svg class="mr-2 size-4" viewBox="0 0 16 16"><path d="M2 3h2V1h4v2h1v12H2z" fill="#8b9fb6" stroke="#fff" stroke-width="1.500"/><path d="M9 2.500v3M13 2.500v3M7.500 5.500h7v2q0 3-3.500 3v4H9" fill="#fff" stroke="#39444f" stroke-width=".9"/></svg>
      <svg class="mr-2 size-4" viewBox="0 0 16 16" fill="#fff" stroke="#42505e" stroke-width=".7"><path d="M.5 12h2.500v3H.5zM3.700 10h2.500v5H3.700zM6.900 7.500h2.500V15H6.900zM10 5h2.500v10H10zM13.200 2h2.300v13h-2.300z"/></svg>
      <svg class="mr-[14px] size-4" viewBox="0 0 16 16"><path d="M.8 5.500h2.700L7.500 1.500v13l-4-4H.8z" fill="#fff" stroke="#42505e" stroke-width=".8"/><path d="M9.500 5.500q1.800 2.500 0 5M11.500 4q3 4 0 8M13.500 2.500q4 5.500 0 11" fill="none" stroke="#fff"/></svg>
      <span class="mr-2 w-[65px] text-center leading-[17px]">20:04<br>02/11/2019</span>
      <button aria-label="Show desktop" class="h-full w-[15px] border border-[#5d7189] bg-linear-to-b from-[#a9b9ca] via-[#7388a0] to-[#9db7d4]"></button>
    </div>
  </div>
</div>
</body>
</html>
